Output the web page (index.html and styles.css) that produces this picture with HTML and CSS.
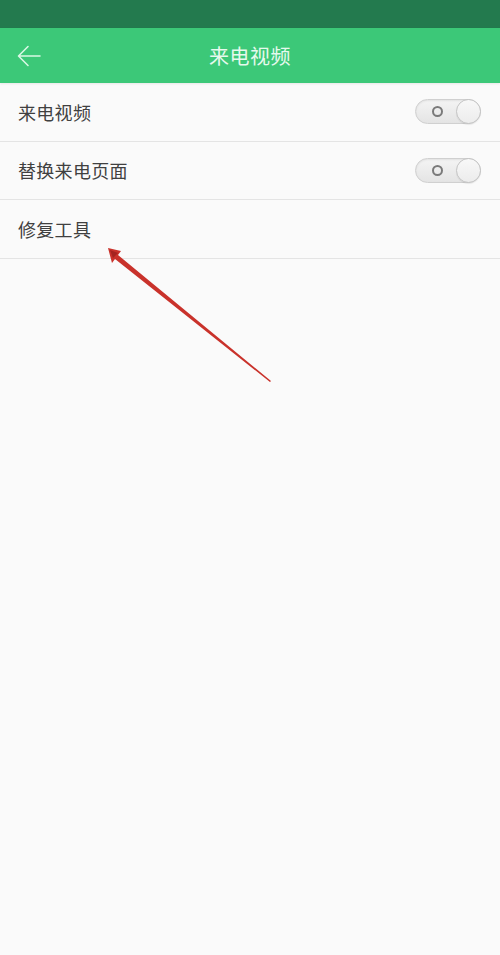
FILE: index.html
```html
<!DOCTYPE html>
<html lang="zh">
<head>
<meta charset="utf-8">
<link rel="stylesheet" href="styles.css">
</head>
<body>
<div class="screen">
  <div class="statusbar"></div>
  <header class="appbar">
    <svg class="back" width="24" height="22" viewBox="0 0 24 22">
      <path d="M23 11H2M11 1.5L1.5 11L11 20.5" fill="none" stroke="#d9f7e4" stroke-width="1.6" stroke-linecap="round" stroke-linejoin="round"/>
    </svg>
    <h1 class="title">来电视频</h1>
  </header>
  <ul class="list">
    <li class="row"><span class="label">来电视频</span><span class="toggle"><span class="ring"></span><span class="knob"></span></span></li>
    <li class="row"><span class="label">替换来电页面</span><span class="toggle"><span class="ring"></span><span class="knob"></span></span></li>
    <li class="row"><span class="label">修复工具</span></li>
  </ul>
  <svg class="annot" width="500" height="955" viewBox="0 0 500 955">
    <polygon points="108,248 121,251 118,255 271,381 270,382 115,259 112,263" fill="#c9322b"/>
    <polygon points="110,250 118,253 113,258" fill="#a52420"/>
  </svg>
</div>
</body>
</html>
```
FILE: styles.css
```css
* { box-sizing: border-box; }
html, body { margin: 0; padding: 0; }
body {
  width: 500px;
  height: 955px;
  background: #fafafa;
  font-family: "Noto Sans CJK SC", "Noto Sans", sans-serif;
  overflow: hidden;
}
.screen { position: relative; width: 500px; height: 955px; }
.statusbar { height: 28px; background: #237a4e; }
.appbar {
  height: 55px;
  background: #3cc878;
  display: flex;
  align-items: center;
  justify-content: center;
  position: relative;
  box-shadow: 0 1px 2px rgba(0,0,0,0.08);
}
.back { position: absolute; left: 17px; top: 17px; }
.title {
  margin: 0;
  font-size: 20px;
  font-weight: 400;
  color: #e6f9ed;
  letter-spacing: 0.5px;
}
.list { list-style: none; margin: 0; padding: 0; }
.row {
  height: 58.5px;
  display: flex;
  align-items: center;
  justify-content: space-between;
  padding: 0 19px 0 18px;
  border-bottom: 1px solid #e4e4e4;
}
.label { font-size: 18px; color: #404040; letter-spacing: 0.3px; }
.toggle {
  position: relative;
  width: 66px;
  height: 25px;
  border-radius: 13px;
  background: linear-gradient(#f4f4f4, #e4e4e4);
  border: 1px solid #d0d0d0;
  box-shadow: inset 0 1px 2px rgba(0,0,0,0.08);
}
.ring {
  position: absolute;
  left: 16px;
  top: 6px;
  width: 11px;
  height: 11px;
  border: 2px solid #7a7a7a;
  border-radius: 50%;
}
.knob {
  position: absolute;
  right: -1px;
  top: -1px;
  width: 25px;
  height: 25px;
  border-radius: 50%;
  background: linear-gradient(#f8f8f8, #ececec);
  border: 1px solid #c4c4c4;
  box-shadow: 0 1px 1px rgba(0,0,0,0.08);
}
.annot { position: absolute; left: 0; top: 0; pointer-events: none; }
```
